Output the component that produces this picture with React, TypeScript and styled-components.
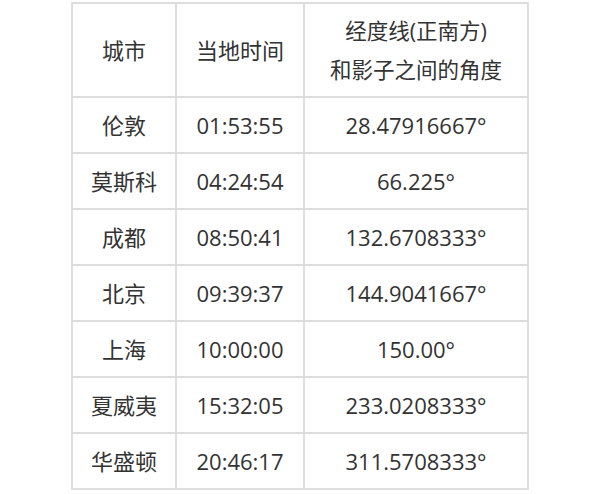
import * as React from 'react'
import styled, { createGlobalStyle } from 'styled-components'

const GlobalStyle = createGlobalStyle`
  html, body {
    margin: 0;
    padding: 0;
    background: #ffffff;
  }
`

const Page = styled.div`
  display: flex;
  justify-content: center;
  padding-top: 2px;
  font-family: 'Open Sans', 'Noto Sans CJK SC', sans-serif;
  color: #333333;
`

const Table = styled.div`
  display: grid;
  grid-template-columns: 104px 128px 224px;
  grid-template-rows: 94px;
  grid-auto-rows: 56px;
  border-top: 2px solid #dedede;
  border-left: 2px solid #dedede;
`

const Cell = styled.div<{ $header?: boolean }>`
  box-sizing: border-box;
  display: flex;
  flex-direction: column;
  align-items: center;
  justify-content: center;
  height: ${(p) => (p.$header ? '94px' : '56px')};
  border-right: 2px solid #dedede;
  border-bottom: 2px solid #dedede;
  font-size: 22px;
  line-height: 39px;
  text-align: center;
  white-space: nowrap;
`

const HeadLine = styled.span`
  font-size: 21.5px;
`

const rows = [
  ['伦敦', '01:53:55', '28.47916667°'],
  ['莫斯科', '04:24:54', '66.225°'],
  ['成都', '08:50:41', '132.6708333°'],
  ['北京', '09:39:37', '144.9041667°'],
  ['上海', '10:00:00', '150.00°'],
  ['夏威夷', '15:32:05', '233.0208333°'],
  ['华盛顿', '20:46:17', '311.5708333°'],
]

export default function App() {
  return (
    <>
      <GlobalStyle />
      <Page>
        <Table>
          <Cell $header>城市</Cell>
          <Cell $header>当地时间</Cell>
          <Cell $header>
            <HeadLine>经度线(正南方)</HeadLine>
            <HeadLine>和影子之间的角度</HeadLine>
          </Cell>
          {rows.map((r) =>
            r.map((v, i) => <Cell key={r[0] + i}>{v}</Cell>)
          )}
        </Table>
      </Page>
    </>
  )
}
